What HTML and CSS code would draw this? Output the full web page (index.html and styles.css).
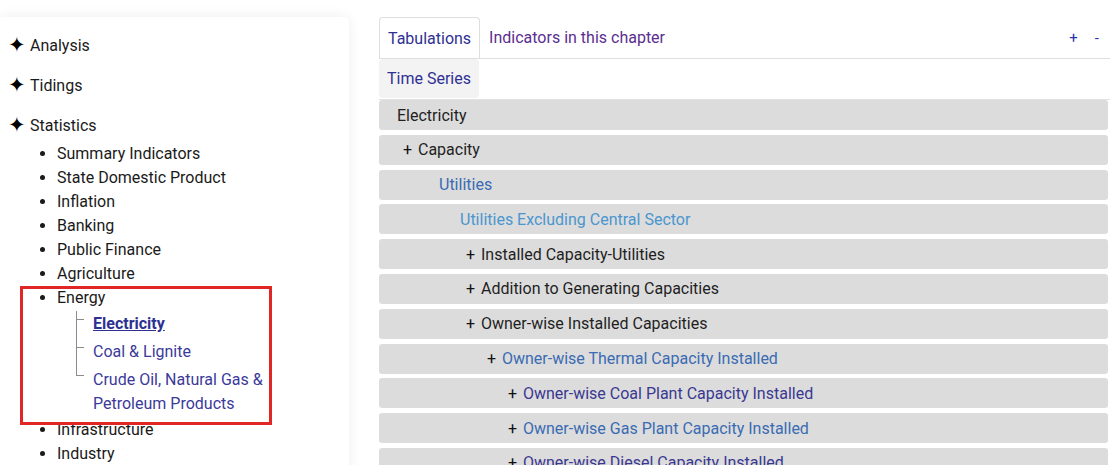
FILE: index.html
```html
<!DOCTYPE html>
<html lang="en">
<head>
<meta charset="utf-8">
<title>Electricity</title>
<link rel="stylesheet" href="styles.css">
</head>
<body>
<div class="page">
  <aside class="sidebar">
    <ul class="top-list">
      <li class="top-item"><span class="star">✦</span>Analysis</li>
      <li class="top-item"><span class="star">✦</span>Tidings</li>
      <li class="top-item"><span class="star">✦</span>Statistics
        <ul class="sub-list">
          <li>Summary Indicators</li>
          <li>State Domestic Product</li>
          <li>Inflation</li>
          <li>Banking</li>
          <li>Public Finance</li>
          <li>Agriculture</li>
          <li class="energy">Energy
            <span class="highlight-box"></span>
            <ul class="tree">
              <li><a class="active" href="#">Electricity</a></li>
              <li><a href="#">Coal &amp; Lignite</a></li>
              <li><a href="#">Crude Oil, Natural Gas &amp; Petroleum Products</a></li>
            </ul>
          </li>
          <li>Infrastructure</li>
          <li>Industry</li>
        </ul>
      </li>
    </ul>
  </aside>
  <main class="main">
    <div class="tabs">
      <a class="tab tab-active" href="#">Tabulations</a>
      <a class="tab tab-other" href="#">Indicators in this chapter</a>
      <div class="zoom-ctrl"><span>+</span><span>-</span></div>
    </div>
    <div class="subtabs">
      <a class="subtab" href="#">Time Series</a>
    </div>
    <div class="rows">
      <div class="row lvl0 c-dark">Electricity</div>
      <div class="row lvl1 c-dark"><span class="plus">+</span>Capacity</div>
      <div class="row lvl2 c-blue">Utilities</div>
      <div class="row lvl3 c-light">Utilities Excluding Central Sector</div>
      <div class="row lvl4 c-dark"><span class="plus">+</span>Installed Capacity-Utilities</div>
      <div class="row lvl4 c-dark"><span class="plus">+</span>Addition to Generating Capacities</div>
      <div class="row lvl4 c-dark"><span class="plus">+</span>Owner-wise Installed Capacities</div>
      <div class="row lvl5 c-blue"><span class="plus">+</span>Owner-wise Thermal Capacity Installed</div>
      <div class="row lvl6 c-indigo"><span class="plus">+</span>Owner-wise Coal Plant Capacity Installed</div>
      <div class="row lvl6 c-blue"><span class="plus">+</span>Owner-wise Gas Plant Capacity Installed</div>
      <div class="row lvl6 c-indigo"><span class="plus">+</span>Owner-wise Diesel Capacity Installed</div>
    </div>
  </main>
</div>
</body>
</html>
```

FILE: styles.css
```css
* { box-sizing: border-box; }
html, body {
  margin: 0;
  padding: 0;
  background: #ffffff;
  font-family: Roboto, "Liberation Sans", Arial, sans-serif;
  font-size: 16px;
  color: #1a1a1a;
  overflow: hidden;
}
a { text-decoration: none; }

.page {
  display: flex;
  align-items: flex-start;
  gap: 30px;
  padding-top: 17px;
  height: 465px;
}

/* Sidebar */
.sidebar {
  flex: 0 0 349px;
  height: 470px;
  background: #fff;
  border-radius: 0 6px 0 0;
  box-shadow: 0 0 14px rgba(0, 0, 0, 0.07);
  padding-top: 17px;
}
.top-list {
  list-style: none;
  margin: 0;
  padding: 0;
}
.top-item {
  line-height: 24px;
  margin-bottom: 16px;
  padding-left: 8px;
}
.star {
  display: inline-block;
  width: 22px;
  height: 24px;
  font-size: 21px;
  line-height: 22px;
  vertical-align: top;
  color: #000;
  font-family: "DejaVu Sans", sans-serif;
}
.sub-list {
  list-style: disc;
  margin: 4px 0 0 0;
  padding-left: 49px;
  line-height: 24px;
}
.sub-list > li { color: #1a1a1a; }

.energy { position: relative; }
.highlight-box {
  position: absolute;
  left: -37px;
  top: 0;
  width: 252px;
  height: 139px;
  border: 3px solid #e12626;
  pointer-events: none;
}

.tree {
  list-style: none;
  margin: 0 0 0 19px;
  padding: 0;
  width: 190px;
}
.tree li {
  position: relative;
  padding: 2px 0 2px 17px;
  line-height: 24px;
}
.tree li::before {
  content: "";
  position: absolute;
  left: 0;
  top: -19px;
  width: 7px;
  height: 28px;
  border-left: 1px solid #8a8a8a;
  border-bottom: 1px solid #8a8a8a;
}
.tree li:first-child::before {
  top: 1px;
  height: 8px;
}
.tree a { color: #3b3a9a; }
.tree a.active {
  font-weight: 700;
  text-decoration: underline;
  color: #2e3192;
}

/* Main */
.main {
  flex: 1;
  padding-right: 2px;
}
.tabs {
  display: flex;
  align-items: flex-start;
  height: 42px;
  border-bottom: 1px solid #dedede;
  margin-right: -2px;
}
.tab {
  display: flex;
  align-items: center;
  padding: 0 8px;
  height: 41px;
}
.tab-active {
  color: #2e3192;
  border: 1px solid #dedede;
  border-bottom: none;
  border-radius: 4px 4px 0 0;
  background: #fff;
}
.tab-other { color: #5b2e91; padding-left: 9px; }
.zoom-ctrl {
  margin-left: auto;
  display: flex;
  align-items: center;
  height: 41px;
  gap: 17px;
  padding-right: 11px;
  color: #2b33b0;
  font-size: 15px;
}

.subtabs {
  display: flex;
  height: 41px;
  border-bottom: 1px solid #e2e2e2;
  margin-right: -2px;
}
.subtab {
  display: flex;
  align-items: center;
  padding: 0 8px;
  height: 39px;
  background: #f3f3f3;
  border-radius: 4px;
  color: #2e3192;
}

.rows {
  display: flex;
  flex-direction: column;
  gap: 4.8px;
}
.row {
  height: 30px;
  background: #dcdcdc;
  border-radius: 3px;
  display: flex;
  align-items: center;
  white-space: nowrap;
}
.plus {
  display: inline-block;
  width: 15px;
  color: #111;
}
.lvl0 { padding-left: 18px; }
.lvl1 { padding-left: 24px; }
.lvl2 { padding-left: 60px; }
.lvl3 { padding-left: 81px; }
.lvl4 { padding-left: 87px; }
.lvl5 { padding-left: 108px; }
.lvl6 { padding-left: 129px; }

.c-dark { color: #1f1f1f; }
.c-blue { color: #3a6bb3; }
.c-light { color: #4b96cf; }
.c-indigo { color: #3a3891; }
```
